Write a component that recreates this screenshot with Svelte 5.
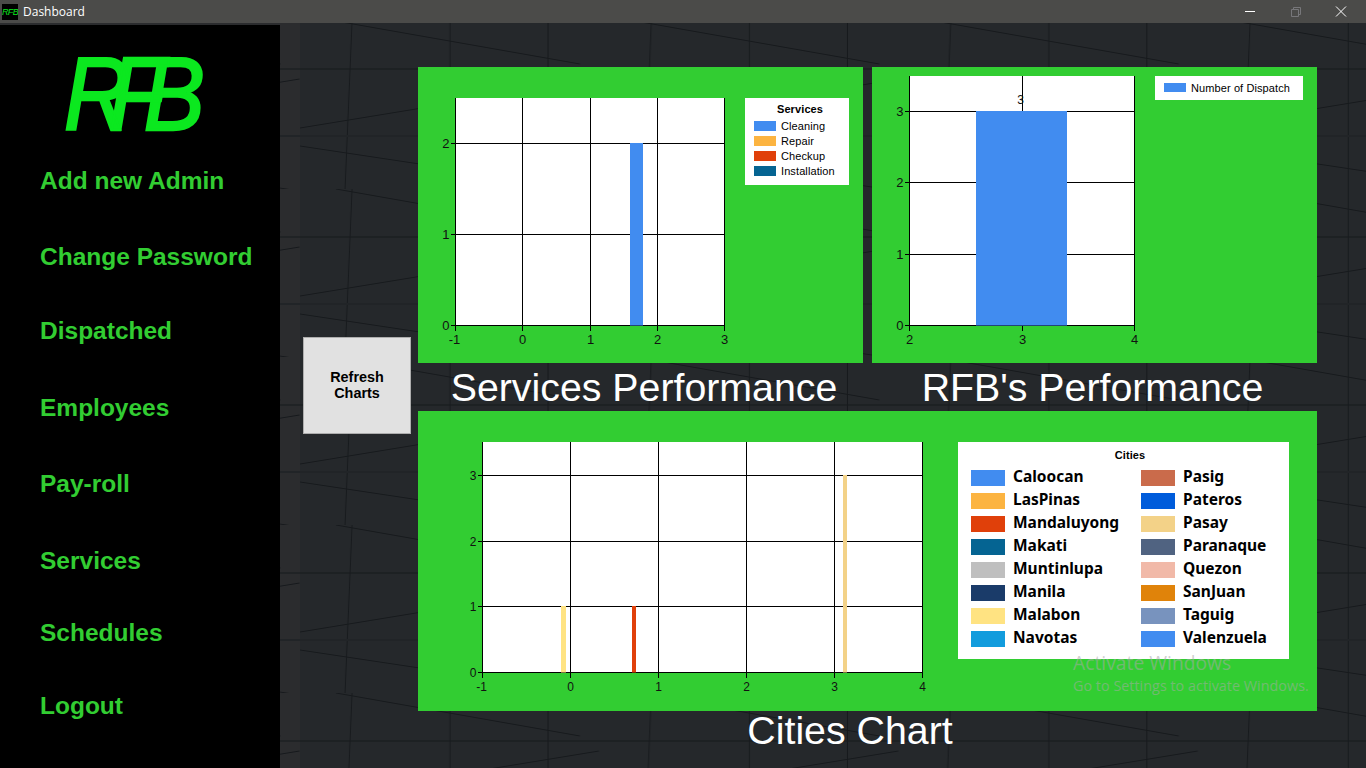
<script>
  const nav = ["Add new Admin", "Change Password", "Dispatched", "Employees", "Pay-roll", "Services", "Schedules", "Logout"];

  const palette = {
    blue: "#418cf0", amber: "#fcb441", red: "#e0400a", teal: "#056492", grey: "#bfbfbf",
    navy: "#1a3b69", sand: "#ffe382", sky: "#129cdd", clay: "#ca6b4b", royal: "#005cdb",
    wheat: "#f3d288", slate: "#506381", blush: "#f1b9a8", orange: "#e0830a", steel: "#7893be"
  };

  const services = {
    w: 305, h: 265, top: 8, font: 13,
    xs: [25.5, 92.5, 160.5, 227.5, 294.5], xLabels: ["-1", "0", "1", "2", "3"],
    ys: [235.5, 144.5, 53.5], yLabels: ["0", "1", "2"],
    bars: [{ x: 200, w: 13, y: 53, c: palette.blue }]
  };
  const dispatch = {
    w: 260, h: 285, top: 6, font: 13,
    xs: [24.5, 137.5, 249.5], xLabels: ["2", "3", "4"],
    ys: [255.5, 184.5, 112.5, 41.5], yLabels: ["0", "1", "2", "3"],
    bars: [{ x: 91, w: 91, y: 41, c: palette.blue, label: "3" }]
  };
  const cities = {
    w: 480, h: 265, top: 6, font: 12,
    xs: [27.5, 115.5, 203.5, 291.5, 379.5, 467.5], xLabels: ["-1", "0", "1", "2", "3", "4"],
    ys: [236.5, 170.5, 105.5, 39.5], yLabels: ["0", "1", "2", "3"],
    bars: [
      { x: 106, w: 5, y: 170, c: palette.sand },
      { x: 177, w: 4, y: 170, c: palette.red },
      { x: 388, w: 4, y: 39, c: palette.wheat }
    ]
  };

  const serviceLegend = [
    ["Cleaning", palette.blue], ["Repair", palette.amber], ["Checkup", palette.red], ["Installation", palette.teal]
  ];
  const cityLegend = [
    ["Caloocan", palette.blue], ["LasPinas", palette.amber], ["Mandaluyong", palette.red], ["Makati", palette.teal],
    ["Muntinlupa", palette.grey], ["Manila", palette.navy], ["Malabon", palette.sand], ["Navotas", palette.sky],
    ["Pasig", palette.clay], ["Pateros", palette.royal], ["Pasay", palette.wheat], ["Paranaque", palette.slate],
    ["Quezon", palette.blush], ["SanJuan", palette.orange], ["Taguig", palette.steel], ["Valenzuela", palette.blue]
  ];
</script>

{#snippet chart(c)}
  {@const left = c.xs[0]}
  {@const right = c.xs[c.xs.length - 1]}
  {@const bottom = c.ys[0]}
  <svg class="chart" width={c.w} height={c.h} font-size={c.font}>
    <rect x={left} y={c.top} width={right - left} height={bottom - c.top} fill="#fff" />
    {#each c.xs as x, i}
      <line x1={x} x2={x} y1={c.top} y2={bottom + 5} stroke="#000" />
      <text x={x - (c.xLabels[i] === "-1" ? 1 : 0)} y={bottom + 18} text-anchor="middle">{c.xLabels[i]}</text>
    {/each}
    {#each c.ys as y, i}
      <line x1={left - 5} x2={right} y1={y} y2={y} stroke="#000" />
      <text x={left - 6} y={y + 4} text-anchor="end">{c.yLabels[i]}</text>
    {/each}
    {#each c.bars as b}
      <rect x={b.x} y={b.y} width={b.w} height={bottom - b.y} fill={b.c} />
      {#if b.label}
        <text class="bar-label" x={b.x + b.w / 2 - 1} y={b.y - 7} text-anchor="middle">{b.label}</text>
      {/if}
    {/each}
  </svg>
{/snippet}

<div class="window">
  <header class="titlebar">
    <span class="app-icon"><span>RFB</span></span>
    <span class="app-title">Dashboard</span>
    <div class="controls">
      <svg width="12" height="12" viewBox="0 0 12 12"><path d="M1 5.5h10" stroke="#fff" /></svg>
      <svg width="12" height="12" viewBox="0 0 12 12" fill="none" stroke="#77777a"><path d="M1.5 3.5h7v7h-7zM3.5 3.5v-2h7v7h-2" /></svg>
      <svg width="12" height="12" viewBox="0 0 12 12"><path d="M1 .5l10 10M11 .5l-10 10" stroke="#fff" /></svg>
    </div>
  </header>

  <div class="body">
    <aside class="sidebar">
      <div class="logo"><span>RFB</span></div>
      <nav>
        {#each nav as item}
          <a href="#{item}">{item}</a>
        {/each}
      </nav>
    </aside>

    <main class="main">
      <!-- the wallpaper behind the form -->
      <svg class="wallpaper" width="100%" height="100%">
        <defs>
          <pattern id="tile" width="299.4" height="168" patternUnits="userSpaceOnUse" patternTransform="translate(20 -2)">
            <g fill="none" stroke="#16191c" stroke-width="1">
              <path d="M52 0L45 168M150 0V168M248 0V168" />
              <path d="M36 0L280 43M0 48H299.4M0 107L299 58M0 125L299 170" />
              <path d="M0 115H299.4" stroke="#212427" stroke-width="2" />
            </g>
          </pattern>
        </defs>
        <rect x="20" width="100%" height="100%" fill="#25282b" />
        <rect width="100%" height="100%" fill="url(#tile)" />
      </svg>

      <div class="side-action">
        <button>Refresh<br />Charts</button>
      </div>

      <div class="content">
        <div class="top-row">
          <section class="col">
            <div class="panel panel-services">
              {@render chart(services)}
              <div class="legend legend-small">
                <h4>Services</h4>
                {#each serviceLegend as [name, colour]}
                  <div class="key"><i style="background:{colour}"></i>{name}</div>
                {/each}
              </div>
            </div>
            <h2>Services Performance</h2>
          </section>
          <section class="col">
            <div class="panel panel-dispatch">
              {@render chart(dispatch)}
              <div class="legend legend-single">
                <div class="key"><i style="background:{palette.blue}"></i>Number of Dispatch</div>
              </div>
            </div>
            <h2 class="rfb-title">RFB's Performance</h2>
          </section>
        </div>

        <section class="col">
          <div class="panel panel-cities">
            {@render chart(cities)}
            <div class="legend legend-cities">
              <h4>Cities</h4>
              <div class="city-grid">
                {#each cityLegend as [name, colour]}
                  <div class="city"><i style="background:{colour}"></i>{name}</div>
                {/each}
              </div>
            </div>
          </div>
          <h2 class="cities-title">Cities Chart</h2>
        </section>
      </div>

      <div class="watermark">
        <div class="wm-big">Activate Windows</div>
        <div class="wm-small">Go to Settings to activate Windows.</div>
      </div>
    </main>
  </div>
</div>

<style>
  :global(body) {
    background: #25282b;
    overflow: hidden;
  }

  .window {
    width: 1366px;
    height: 768px;
    display: flex;
    flex-direction: column;
    font-family: "Liberation Sans", Arial, sans-serif;
    overflow: hidden;
  }

  .titlebar {
    height: 23px;
    flex: none;
    display: flex;
    align-items: center;
    background: #4b4b49;
    color: #fff;
    padding-left: 2px;
  }

  .app-icon {
    width: 16px;
    height: 16px;
    background: #000;
    display: flex;
    align-items: center;
    justify-content: center;
    overflow: hidden;
  }

  .app-icon span {
    color: #0be81f;
    font-size: 9px;
    font-style: italic;
    letter-spacing: -0.6px;
  }

  .app-title {
    margin-left: 5px;
    font-family: "Open Sans", sans-serif;
    font-size: 12px;
  }

  .controls {
    margin-left: auto;
    display: flex;
    gap: 33.5px;
    padding-right: 19px;
  }

  .body {
    flex: 1;
    display: flex;
    background: #2b2c2e;
    min-height: 0;
  }

  .sidebar {
    width: 280px;
    flex: none;
    margin-top: 2px;
    background: #000;
    display: flex;
    flex-direction: column;
  }

  .logo {
    height: 108px;
    box-sizing: border-box;
    padding: 15px 0 0 64px;
    color: #0be81f;
    font-size: 104px;
    line-height: 108px;
    font-style: italic;
    white-space: nowrap;
  }

  .logo span {
    display: inline-block;
    letter-spacing: -24px;
    -webkit-text-stroke: 2.5px #0be81f;
    transform: scaleX(0.88);
    transform-origin: left center;
  }

  nav {
    display: flex;
    flex-direction: column;
    padding-left: 40px;
    margin-top: 33px;
  }

  nav a {
    height: 30px;
    line-height: 30px;
    margin-bottom: 46px;
    color: #32cd32;
    font-size: 24.5px;
    font-weight: bold;
    text-decoration: none;
    white-space: nowrap;
  }

  nav a:nth-child(2) { margin-bottom: 44px; }
  nav a:nth-child(3) { margin-bottom: 47px; }
  nav a:nth-child(5) { margin-bottom: 47px; }
  nav a:nth-child(6) { margin-bottom: 42px; }
  nav a:nth-child(7) { margin-bottom: 43px; }

  .main {
    flex: 1;
    position: relative;
    display: flex;
    min-width: 0;
  }

  .wallpaper {
    position: absolute;
    inset: 0;
  }

  .side-action {
    position: relative;
    padding: 314px 7px 0 23px;
  }

  button {
    width: 108px;
    height: 97px;
    display: block;
    background: #e1e1e1;
    border: 1px solid #adadad;
    color: #000;
    font-family: inherit;
    font-size: 14.4px;
    font-weight: bold;
    line-height: 16px;
    padding: 0 0 2px;
  }

  .content {
    position: relative;
    width: 899px;
    padding-top: 44px;
  }

  .top-row {
    display: flex;
    gap: 9px;
  }

  .col {
    flex: 1;
  }

  .panel {
    display: flex;
    align-items: flex-start;
    background: #32cd32;
    box-sizing: border-box;
  }

  .panel-services {
    height: 296px;
    padding: 23px 0 0 12px;
  }

  .panel-dispatch {
    height: 296px;
    padding: 3px 0 0 13px;
  }

  .panel-cities {
    height: 300px;
    padding: 25px 0 0 37px;
  }

  .chart {
    display: block;
    flex: none;
    fill: #111;
  }

  .chart text {
    font-family: "Liberation Sans", Arial, sans-serif;
  }

  .chart line {
    shape-rendering: crispEdges;
  }

  .bar-label {
    font-size: 12px;
  }

  h2 {
    margin: 0;
    height: 48px;
    line-height: 49px;
    color: #fff;
    font-size: 39.3px;
    font-weight: normal;
    text-align: center;
    white-space: nowrap;
  }

  .panel-services + h2 {
    padding-left: 7px;
  }

  .rfb-title {
    padding-right: 4px;
  }

  .cities-title {
    height: 39px;
    line-height: 39px;
    padding-right: 35px;
  }

  .legend {
    background: #fff;
    color: #000;
    font-size: 11px;
    letter-spacing: 0.1px;
  }

  .legend h4 {
    margin: 0;
    font-size: 11px;
    font-weight: bold;
    text-align: center;
  }

  .key {
    display: flex;
    align-items: center;
    height: 15px;
    white-space: nowrap;
  }

  .key i {
    width: 22px;
    height: 10px;
    margin-right: 5px;
  }

  .legend-small {
    width: 104px;
    height: 87px;
    margin: 8px 0 0 10px;
    padding: 5px 0 0 9px;
    box-sizing: border-box;
  }

  .legend-small h4 {
    padding-right: 3px;
    height: 15px;
    line-height: 13px;
  }

  .legend-single {
    width: 148px;
    height: 24px;
    margin: 6px 0 0 10px;
    padding: 4px 0 0 9px;
    box-sizing: border-box;
  }

  .legend-single .key i {
    height: 9px;
  }

  .legend-cities {
    width: 331px;
    height: 217px;
    margin: 6px 0 0 23px;
    padding: 6px 0 0 13px;
    box-sizing: border-box;
  }

  .legend-cities h4 {
    height: 18px;
    line-height: 14px;
  }

  .city-grid {
    display: grid;
    grid-template-columns: 170px 1fr;
    grid-template-rows: repeat(8, 23px);
    grid-auto-flow: column;
  }

  .city {
    display: flex;
    align-items: flex-start;
    font-family: "Noto Sans", sans-serif;
    font-size: 15.5px;
    line-height: 20px;
    font-weight: 700;
    letter-spacing: 0;
    white-space: nowrap;
  }

  .city i {
    width: 34px;
    height: 16px;
    margin: 4px 8px 0 0;
  }

  .watermark {
    position: absolute;
    left: 793px;
    top: 627px;
    font-family: "Open Sans", sans-serif;
    color: rgba(170, 170, 170, 0.55);
    white-space: nowrap;
    pointer-events: none;
  }

  .wm-big {
    font-size: 19.3px;
    line-height: 26px;
  }

  .wm-small {
    font-size: 14.4px;
    line-height: 20px;
  }
</style>
